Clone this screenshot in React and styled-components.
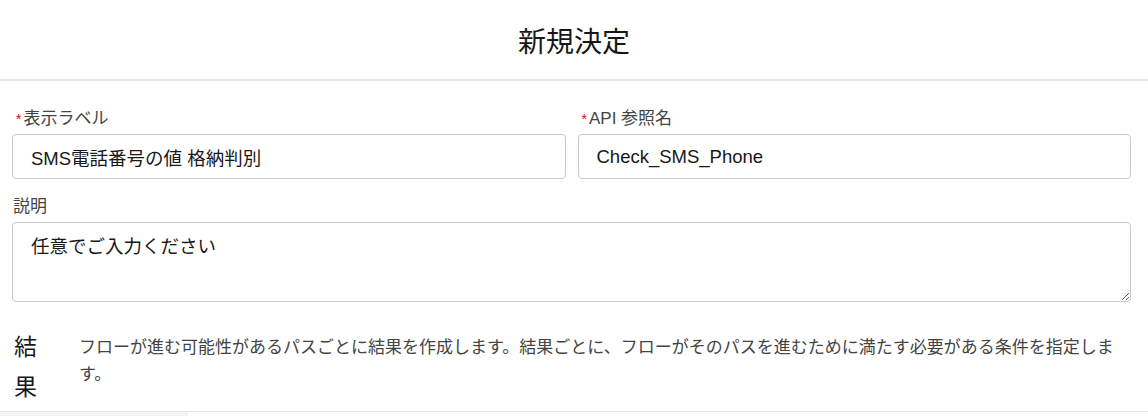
import React from 'react';
import styled, { createGlobalStyle } from 'styled-components';

const GlobalStyle = createGlobalStyle`
  body {
    margin: 0;
    background: #ffffff;
    font-family: "Liberation Sans", "Noto Sans CJK JP", "Noto Sans", sans-serif;
    color: #181818;
  }
`;

const Page = styled.div`
  width: 1148px;
  height: 416px;
  overflow: hidden;
  display: flex;
  flex-direction: column;
`;

const Header = styled.header`
  height: 79px;
  display: flex;
  align-items: center;
  justify-content: center;
  border-bottom: 2px solid #e5e5e5;
  flex-shrink: 0;
`;

const Title = styled.h1`
  margin: 0;
  font-size: 28px;
  font-weight: 400;
  color: #181818;
`;

const Body = styled.div`
  padding: 26px 17px 0 12px;
  display: flex;
  flex-direction: column;
`;

const Row = styled.div`
  display: grid;
  grid-template-columns: 1fr 1fr;
  gap: 12px;
`;

const Field = styled.div`
  display: flex;
  flex-direction: column;
  margin-top: ${props => props.$top || 0}px;
`;

const Label = styled.label`
  font-size: 17px;
  line-height: 20px;
  color: #444444;
  padding-top: 2px;
  margin-bottom: 5px;
  padding-left: ${props => props.$required ? '4px' : '1px'};
`;

const Required = styled.span`
  color: #ea001e;
  margin-right: 2px;
  font-size: 14px;
`;

const Input = styled.input`
  height: 45px;
  box-sizing: border-box;
  border: 1px solid #c9c9c9;
  border-radius: 4px;
  padding: 0 18px;
  font-family: inherit;
  font-size: 18.5px;
  color: #181818;
  background: #ffffff;
  outline: none;
`;

const TextArea = styled.textarea`
  height: 80px;
  box-sizing: border-box;
  border: 1px solid #c9c9c9;
  border-radius: 4px;
  padding: 12px 18px;
  font-family: inherit;
  font-size: 18.5px;
  line-height: 24px;
  color: #181818;
  resize: vertical;
  outline: none;
  &::placeholder {
    color: #181818;
  }
`;

const Outcomes = styled.section`
  display: flex;
  align-items: flex-start;
  margin-top: 25px;
  padding-left: 2px;
  gap: 41px;
`;

const OutcomeHeading = styled.h2`
  margin: 0;
  width: 24px;
  font-size: 23px;
  font-weight: 400;
  line-height: 40px;
  color: #181818;
  flex-shrink: 0;
`;

const OutcomeText = styled.p`
  margin: 0;
  padding-top: 7px;
  padding-right: 6px;
  font-size: 17px;
  line-height: 27px;
  color: #444444;
`;

const Footer = styled.div`
  margin-top: 4px;
  border-top: 1px solid #e5e5e5;
  display: flex;
  flex: 1;
`;

const FooterTab = styled.div`
  width: 188px;
  background: #f3f3f3;
`;

export default function App() {
  return (
    <Page>
      <GlobalStyle />
      <Header>
        <Title>新規決定</Title>
      </Header>
      <Body>
        <Row>
          <Field>
            <Label $required><Required>*</Required>表示ラベル</Label>
            <Input defaultValue="SMS電話番号の値 格納判別" />
          </Field>
          <Field>
            <Label $required><Required>*</Required>API 参照名</Label>
            <Input defaultValue="Check_SMS_Phone" />
          </Field>
        </Row>
        <Field $top={16}>
          <Label>説明</Label>
          <TextArea placeholder="任意でご入力ください" />
        </Field>
        <Outcomes>
          <OutcomeHeading>結果</OutcomeHeading>
          <OutcomeText>
            フローが進む可能性があるパスごとに結果を作成します。結果ごとに、フローがそのパスを進むために満たす必要がある条件を指定します。
          </OutcomeText>
        </Outcomes>
      </Body>
      <Footer>
        <FooterTab />
      </Footer>
    </Page>
  );
}
